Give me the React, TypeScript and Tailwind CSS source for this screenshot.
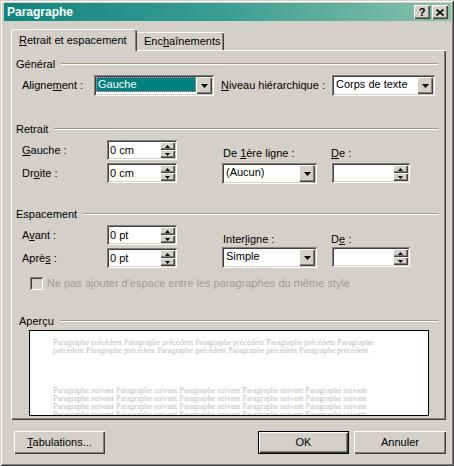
import React from 'react'

const sunken =
  'shadow-[inset_1px_1px_0_#808080,inset_-1px_-1px_0_#ffffff,inset_2px_2px_0_#404040,inset_-2px_-2px_0_#d4d0c8]'
const raised =
  'shadow-[inset_1px_1px_0_#ffffff,inset_-1px_-1px_0_#404040,inset_-2px_-2px_0_#808080]'

const DownTriangle = () => (
  <svg width="7" height="4" viewBox="0 0 7 4">
    <path d="M0 0h7L3.5 4z" fill="#000" />
  </svg>
)

const ComboBox = ({
  value,
  width,
  focused = false,
}: {
  value: string
  width: number
  focused?: boolean
}) => (
  <div
    className={`flex h-[21px] shrink-0 bg-white p-[2px] ${sunken}`}
    style={{ width }}
  >
    <div className="flex min-w-0 flex-1 pb-[2px]">
      <div
        className={`flex flex-1 items-center pl-[2px] ${
          focused ? 'bg-[#008080] text-white outline-1 outline-dotted outline-[#f09090] -outline-offset-1' : ''
        }`}
      >
        {value}
      </div>
    </div>
    <div className={`flex h-[17px] w-[16px] items-center justify-center bg-[#d4d0c8] ${raised}`}>
      <DownTriangle />
    </div>
  </div>
)

const SpinBox = ({ value, width }: { value: string; width: number }) => (
  <div className={`flex h-[20px] shrink-0 bg-white p-[2px] ${sunken}`} style={{ width }}>
    <div className="flex flex-1 items-center pl-[1px]">{value}</div>
    <div className="flex w-[15px] flex-col">
      <div className={`flex h-[8px] items-center justify-center bg-[#d4d0c8] ${raised}`}>
        <svg width="5" height="3" viewBox="0 0 5 3">
          <path d="M2.5 0L5 3H0z" fill="#000" />
        </svg>
      </div>
      <div className={`flex h-[8px] items-center justify-center bg-[#d4d0c8] ${raised}`}>
        <svg width="5" height="3" viewBox="0 0 5 3">
          <path d="M0 0h5L2.5 3z" fill="#000" />
        </svg>
      </div>
    </div>
  </div>
)

const GroupHeader = ({ label, className = '' }: { label: string; className?: string }) => (
  <div className={`flex h-[14px] items-center pr-[8px] ${className}`}>
    <span>{label}</span>
    <div className="ml-[6px] h-[2px] flex-1 border-t border-t-[#a6977f] border-b border-b-white" />
  </div>
)

const Button = ({
  children,
  width,
  isDefault = false,
}: {
  children: React.ReactNode
  width: number
  isDefault?: boolean
}) => (
  <div
    className={`h-[23px] shrink-0 bg-[#d4d0c8] ${isDefault ? 'border border-black' : ''}`}
    style={{ width }}
  >
    <div className={`flex h-full items-center justify-center ${raised}`}>{children}</div>
  </div>
)

const precedent = Array.from({ length: 9 }, () => 'Paragraphe précédent').join(' ')
const suivant = Array.from({ length: 24 }, () => 'Paragraphe suivant').join(' ')

export default function App() {
  return (
    <div className="h-[466px] w-[454px] overflow-hidden bg-[#d4d0c8] font-['Liberation_Sans',Arial,sans-serif] text-[11px] leading-[13px] text-black shadow-[inset_1px_1px_0_#d4d0c8,inset_-1px_-1px_0_#404040,inset_2px_2px_0_#ffffff,inset_-2px_-2px_0_#808080]">
      <div className="pl-[4px] pr-[3px] pt-[3px]">
        {/* Title bar */}
        <div className="flex h-[18px] items-center bg-gradient-to-r from-[#0b847f] via-[#3a9e94] to-[#86c2aa] pl-[3px] pr-[3px]">
          <span className="flex-1 text-[12px] font-bold text-white">Paragraphe</span>
          <div className={`mr-[2px] flex h-[14px] w-[16px] items-center justify-center bg-[#d4d0c8] text-[11px] font-bold ${raised}`}>
            ?
          </div>
          <div className={`flex h-[14px] w-[16px] items-center justify-center bg-[#d4d0c8] ${raised}`}>
            <svg width="8" height="7" viewBox="0 0 8 7">
              <path d="M0.5 0.5L7.5 6.5M7.5 0.5L0.5 6.5" stroke="#000" strokeWidth="1.6" />
            </svg>
          </div>
        </div>

        <div className="pl-[7px] pt-[8px]">
          {/* Tabs */}
          <div className="flex h-[21px] items-end">
            <div className="relative z-10 -mb-[1px] flex h-[22px] w-[126px] items-center rounded-t-[2px] border-l border-t border-white bg-[#d4d0c8] pl-[7px] shadow-[inset_-1px_0_0_#404040,inset_-2px_0_0_#808080]">
              <span>
                <u>R</u>etrait et espacement
              </span>
            </div>
            <div className="flex h-[18px] w-[87px] items-center rounded-t-[2px] border-t border-white bg-[#d4d0c8] pl-[7px] shadow-[inset_-1px_0_0_#404040,inset_-2px_0_0_#808080]">
              <span>
                Enc<u>h</u>aînements
              </span>
            </div>
          </div>

          {/* Panel */}
          <div className="h-[370px] w-[435px] border-l border-t border-white pl-[4px] shadow-[inset_-1px_-1px_0_#404040,inset_-2px_-2px_0_#808080]">
            <GroupHeader label="Général" className="mt-[6px]" />
            <div className="mt-[4px] flex items-center">
              <span className="w-[78px] pl-[6px]">
                Aligne<u>m</u>ent :
              </span>
              <ComboBox value="Gauche" width={120} focused />
              <span className="ml-[7px] w-[111px]">
                <u>N</u>iveau hiérarchique :
              </span>
              <ComboBox value="Corps de texte" width={103} />
            </div>

            <GroupHeader label="Retrait" className="mt-[26px]" />
            <div className="mt-[4px] flex">
              <div className="flex w-[206px] flex-col gap-[3px]">
                <div className="flex items-center">
                  <span className="w-[91px] pl-[6px]">
                    <u>G</u>auche :
                  </span>
                  <SpinBox value="0 cm" width={70} />
                </div>
                <div className="flex items-center">
                  <span className="w-[91px] pl-[6px]">
                    Dr<u>o</u>ite :
                  </span>
                  <SpinBox value="0 cm" width={70} />
                </div>
              </div>
              <div className="flex flex-col pt-[7px]">
                <div className="flex">
                  <span className="w-[109px] pl-[1px]">
                    De <u>1</u>ère ligne :
                  </span>
                  <span>
                    <u>D</u>e :
                  </span>
                </div>
                <div className="mt-[3px] flex">
                  <ComboBox value="(Aucun)" width={95} />
                  <div className="ml-[15px]">
                    <SpinBox value="" width={78} />
                  </div>
                </div>
              </div>
            </div>

            <GroupHeader label="Espacement" className="mt-[23px]" />
            <div className="mt-[4px] flex">
              <div className="flex w-[206px] flex-col gap-[3px]">
                <div className="flex items-center">
                  <span className="w-[91px] pl-[6px]">
                    A<u>v</u>ant :
                  </span>
                  <SpinBox value="0 pt" width={70} />
                </div>
                <div className="flex items-center">
                  <span className="w-[91px] pl-[6px]">
                    Aprè<u>s</u> :
                  </span>
                  <SpinBox value="0 pt" width={70} />
                </div>
              </div>
              <div className="flex flex-col pt-[8px]">
                <div className="flex">
                  <span className="w-[109px] pl-[1px]">
                    Inter<u>l</u>igne :
                  </span>
                  <span>
                    D<u>e</u> :
                  </span>
                </div>
                <div className="mt-[1px] flex">
                  <ComboBox value="Simple" width={95} />
                  <div className="ml-[15px]">
                    <SpinBox value="" width={78} />
                  </div>
                </div>
              </div>
            </div>

            <div className="mt-[9px] flex items-center pl-[14px] text-[#a39a88]">
              <div className={`h-[13px] w-[13px] bg-[#d4d0c8] ${sunken}`} />
              <span className="ml-[4px]">
                Ne pas ajouter d'espace entre les paragraphes du même style
              </span>
            </div>

            <GroupHeader label="Aperçu" className="mt-[24px] pl-[3px]" />
            <div className="mt-[2px] ml-[13px] h-[86px] w-[400px] overflow-hidden border border-black bg-white pl-[23px] pr-[50px] pt-[8px] font-['Liberation_Serif','Times_New_Roman',serif] text-[8px] leading-[8px] text-[#c0c0c0]">
              <div className="h-[16px] overflow-hidden">{precedent}</div>
              <div className="mt-[32px] h-[36px] overflow-hidden">{suivant}</div>
            </div>
          </div>

          {/* Buttons */}
          <div className="mt-[11px] flex pl-[3px] pr-[5px]">
            <Button width={91}>
              <span>
                <u>T</u>abulations...
              </span>
            </Button>
            <div className="flex-1" />
            <Button width={91} isDefault>
              OK
            </Button>
            <div className="w-[5px]" />
            <Button width={92}>Annuler</Button>
          </div>
        </div>
      </div>
    </div>
  )
}
